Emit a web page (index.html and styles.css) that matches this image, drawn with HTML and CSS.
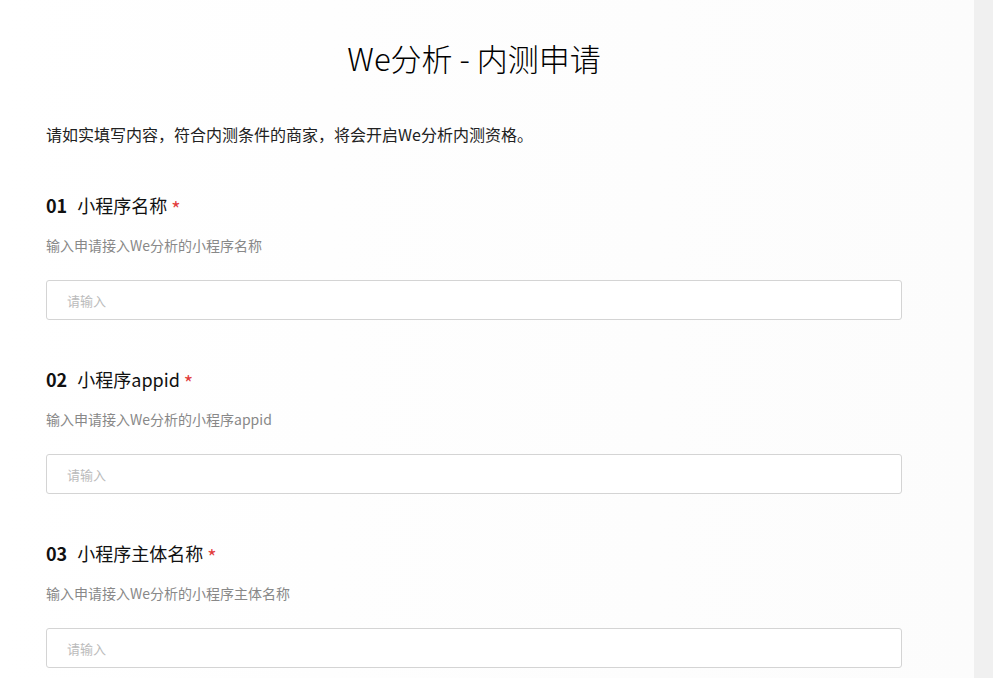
FILE: index.html
```html
<!DOCTYPE html>
<html lang="zh-CN">
<head>
  <meta charset="UTF-8" />
  <meta name="viewport" content="width=device-width, initial-scale=1.0"/>
  <title>We分析 - 内测申请</title>
  <link rel="stylesheet" href="styles.css">
</head>
<body>
  <div class="page">
    <main class="main">
      <div class="container">
        <h1 class="title">We分析 - 内测申请</h1>
        <p class="intro">请如实填写内容，符合内测条件的商家，将会开启We分析内测资格。</p>

        <form class="form">
          <div class="field">
            <div class="field-label"><span class="num">01</span>小程序名称<span class="req">*</span></div>
            <div class="field-hint">输入申请接入We分析的小程序名称</div>
            <input class="field-input" type="text" placeholder="请输入">
          </div>

          <div class="field">
            <div class="field-label"><span class="num">02</span>小程序appid<span class="req">*</span></div>
            <div class="field-hint">输入申请接入We分析的小程序appid</div>
            <input class="field-input" type="text" placeholder="请输入">
          </div>

          <div class="field">
            <div class="field-label"><span class="num">03</span>小程序主体名称<span class="req">*</span></div>
            <div class="field-hint">输入申请接入We分析的小程序主体名称</div>
            <input class="field-input" type="text" placeholder="请输入">
          </div>
        </form>
      </div>
    </main>
    <aside class="side"></aside>
  </div>
</body>
</html>
```

FILE: styles.css
```css
/* General */
html, body {
  margin: 0;
  height: 100%;
  overflow: hidden;
}

body {
  font-family: "Noto Sans CJK SC", "Noto Sans", sans-serif;
  color: #333;
  background: #fff;
}

.page {
  display: flex;
  height: 100vh;
}

.main {
  width: 974px;
  flex-shrink: 0;
  background: linear-gradient(to right, #fff 0%, #fcfcfc 100%);
}

.side {
  flex: 1;
  background: #f0f0f0;
}

.container {
  width: 856px;
  padding-left: 46px;
}

/* Header */
.title {
  margin: 38px 0 0;
  font-size: 31px;
  line-height: 40px;
  font-weight: 300;
  color: #000;
  text-align: center;
}

.intro {
  margin: 46px 0 0;
  font-size: 16px;
  line-height: 20px;
  font-weight: 400;
  color: #222;
}

/* Form */
.form {
  margin-top: 49px;
}

.field {
  margin-bottom: 47px;
}

.field-label {
  height: 24px;
  font-size: 18px;
  line-height: 24px;
  font-weight: 400;
  color: #111;
}

.num {
  font-weight: 700;
  margin-right: 10px;
}

.req {
  color: #e23c3c;
  margin-left: 4px;
  font-size: 20px;
  vertical-align: -4px;
  line-height: 1;
}

.field-hint {
  margin-top: 19px;
  font-size: 14px;
  line-height: 18px;
  font-weight: 400;
  color: #888;
}

.field-input {
  display: block;
  width: 100%;
  height: 40px;
  margin-top: 26px;
  padding: 0 20px;
  border: 1px solid #d4d4d4;
  border-radius: 3px;
  font-family: inherit;
  font-size: 13px;
  box-sizing: border-box;
  outline: none;
}

.field-input::placeholder {
  color: #bbb;
}
```
